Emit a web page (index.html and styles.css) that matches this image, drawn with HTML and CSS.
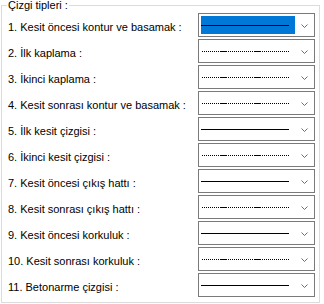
FILE: index.html
```html
<!DOCTYPE html>
<html lang="tr">
<head>
    <meta charset="UTF-8">
    <title>Çizgi tipleri</title>
    <link rel="stylesheet" href="styles.css">
</head>
<body>
    <fieldset class="group">
        <legend>Çizgi tipleri :</legend>
        <div class="rows">
            <span class="label">1. Kesit öncesi kontur ve basamak :</span>
            <div class="combo selected">
                <span class="value"><svg class="line" width="88" height="1"><line x1="0" y1="0.5" x2="88" y2="0.5"/></svg></span>
                <span class="arrow"><svg width="7" height="4"><polyline points="0.5,0.5 3.5,3.5 6.5,0.5"/></svg></span>
            </div>

            <span class="label">2. İlk kaplama :</span>
            <div class="combo">
                <span class="value"><svg class="line dashdot" width="88" height="1"><line x1="0" y1="0.5" x2="88" y2="0.5"/></svg></span>
                <span class="arrow"><svg width="7" height="4"><polyline points="0.5,0.5 3.5,3.5 6.5,0.5"/></svg></span>
            </div>

            <span class="label">3. İkinci kaplama :</span>
            <div class="combo">
                <span class="value"><svg class="line dashdot" width="88" height="1"><line x1="0" y1="0.5" x2="88" y2="0.5"/></svg></span>
                <span class="arrow"><svg width="7" height="4"><polyline points="0.5,0.5 3.5,3.5 6.5,0.5"/></svg></span>
            </div>

            <span class="label">4. Kesit sonrası kontur ve basamak :</span>
            <div class="combo">
                <span class="value"><svg class="line dashdot" width="88" height="1"><line x1="0" y1="0.5" x2="88" y2="0.5"/></svg></span>
                <span class="arrow"><svg width="7" height="4"><polyline points="0.5,0.5 3.5,3.5 6.5,0.5"/></svg></span>
            </div>

            <span class="label">5. İlk kesit çizgisi :</span>
            <div class="combo">
                <span class="value"><svg class="line" width="88" height="1"><line x1="0" y1="0.5" x2="88" y2="0.5"/></svg></span>
                <span class="arrow"><svg width="7" height="4"><polyline points="0.5,0.5 3.5,3.5 6.5,0.5"/></svg></span>
            </div>

            <span class="label">6. İkinci kesit çizgisi :</span>
            <div class="combo">
                <span class="value"><svg class="line dashdot" width="88" height="1"><line x1="0" y1="0.5" x2="88" y2="0.5"/></svg></span>
                <span class="arrow"><svg width="7" height="4"><polyline points="0.5,0.5 3.5,3.5 6.5,0.5"/></svg></span>
            </div>

            <span class="label">7. Kesit öncesi çıkış hattı :</span>
            <div class="combo">
                <span class="value"><svg class="line" width="88" height="1"><line x1="0" y1="0.5" x2="88" y2="0.5"/></svg></span>
                <span class="arrow"><svg width="7" height="4"><polyline points="0.5,0.5 3.5,3.5 6.5,0.5"/></svg></span>
            </div>

            <span class="label">8. Kesit sonrası çıkış hattı :</span>
            <div class="combo">
                <span class="value"><svg class="line dashdot" width="88" height="1"><line x1="0" y1="0.5" x2="88" y2="0.5"/></svg></span>
                <span class="arrow"><svg width="7" height="4"><polyline points="0.5,0.5 3.5,3.5 6.5,0.5"/></svg></span>
            </div>

            <span class="label">9. Kesit öncesi korkuluk :</span>
            <div class="combo">
                <span class="value"><svg class="line" width="88" height="1"><line x1="0" y1="0.5" x2="88" y2="0.5"/></svg></span>
                <span class="arrow"><svg width="7" height="4"><polyline points="0.5,0.5 3.5,3.5 6.5,0.5"/></svg></span>
            </div>

            <span class="label">10. Kesit sonrası korkuluk :</span>
            <div class="combo">
                <span class="value"><svg class="line dashdot" width="88" height="1"><line x1="0" y1="0.5" x2="88" y2="0.5"/></svg></span>
                <span class="arrow"><svg width="7" height="4"><polyline points="0.5,0.5 3.5,3.5 6.5,0.5"/></svg></span>
            </div>

            <span class="label">11. Betonarme çizgisi :</span>
            <div class="combo">
                <span class="value"><svg class="line" width="88" height="1"><line x1="0" y1="0.5" x2="88" y2="0.5"/></svg></span>
                <span class="arrow"><svg width="7" height="4"><polyline points="0.5,0.5 3.5,3.5 6.5,0.5"/></svg></span>
            </div>
        </div>
    </fieldset>
</body>
</html>
```

FILE: styles.css
```css
body {
    margin: 0;
    width: 324px;
    height: 304px;
    background-color: #fff;
    font-family: "Liberation Sans", Arial, sans-serif;
    font-size: 11px;
    color: #000;
}

/* Group box */
.group {
    margin: 0 4px 0 1px;
    padding: 2px 4px 5px 6px;
    border: 1px solid #dcdcdc;
    min-width: 0;
}

.group legend {
    margin-left: -1px;
    padding: 0 1px;
    line-height: 11px;
}

.rows {
    display: grid;
    grid-template-columns: 190px 117px;
    grid-auto-rows: 24px;
    row-gap: 2px;
}

.label {
    padding-top: 8px;
    line-height: 13px;
    white-space: nowrap;
}

/* Combo box */
.combo {
    display: flex;
    box-sizing: border-box;
    height: 24px;
    padding: 2px;
    border: 1px solid #7a7a7a;
    background-color: #fff;
}

.combo .value {
    display: block;
    width: 94px;
    height: 18px;
    box-sizing: border-box;
    padding-top: 9px;
}

.combo.selected .value {
    background-color: #0078d7;
}

.line {
    display: block;
}

.line line {
    stroke: #000;
    stroke-width: 1;
}

.line.dashdot line {
    stroke-dasharray: 1 1 1 1 1 1 1 1 1 1 1 1 1 1 1 1 1 1 1 1 1 1 1 1 1 1 7 1;
    stroke-dashoffset: 7;
}

.combo .arrow {
    display: block;
    flex: 1;
    padding: 8px 0 0 6px;
}

.arrow svg {
    display: block;
}

.arrow polyline {
    fill: none;
    stroke: #6d6d6d;
    stroke-width: 1;
}
```
